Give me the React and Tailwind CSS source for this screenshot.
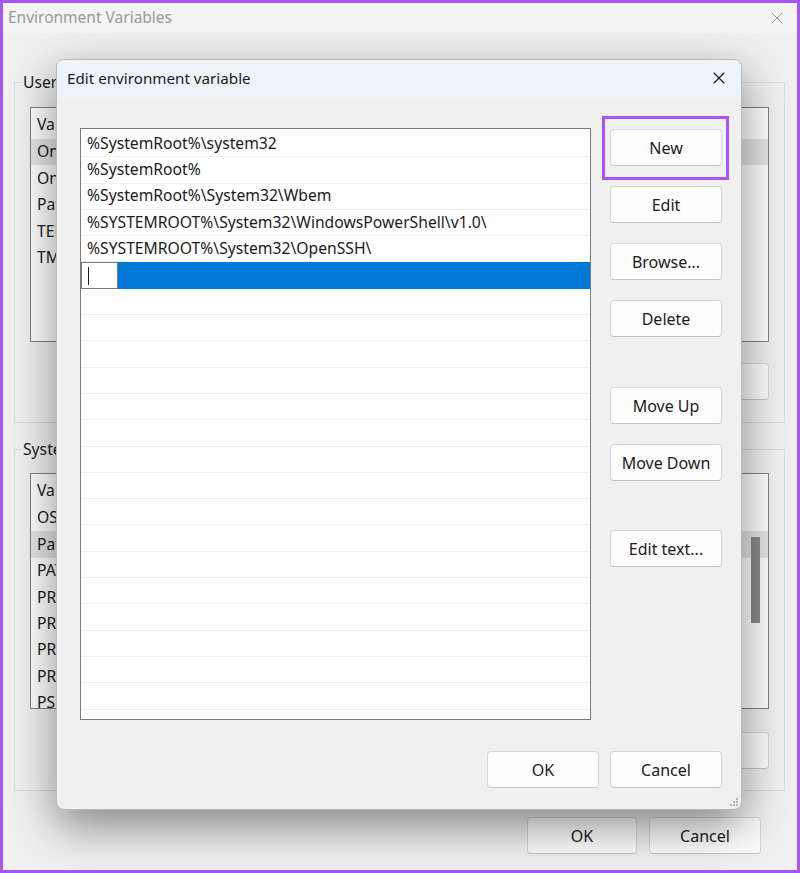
import {X} from 'lucide-react';

const paths = [
  '%SystemRoot%\\system32',
  '%SystemRoot%',
  '%SystemRoot%\\System32\\Wbem',
  '%SYSTEMROOT%\\System32\\WindowsPowerShell\\v1.0\\',
  '%SYSTEMROOT%\\System32\\OpenSSH\\',
];

const userVars = ['OneDrive', 'OneDriveConsumer', 'Path', 'TEMP', 'TMP'];
const systemVars = ['OS', 'Path', 'PATHEXT', 'PROCESSOR_ARCHITECTURE', 'PROCESSOR_IDENTIFIER', 'PROCESSOR_LEVEL', 'PROCESSOR_REVISION', 'PSModulePath'];

const font = {fontFamily: '"Noto Sans", "Open Sans", sans-serif'};

function WinButton({children, className = ''}) {
  return (
    <div className={`flex items-center justify-center h-[37px] rounded-[4px] border border-[#d6d6d6] border-b-[#c4c4c4] bg-[#fdfdfd] text-[16px] text-[#1b1b1b] ${className}`}>
      {children}
    </div>
  );
}

function BackList({items, selected, height}) {
  return (
    <div className={`border border-[#828282] bg-white overflow-hidden pt-[2px] ${height}`}>
      <div className="h-[29px] flex items-center pl-[6px] text-[15.7px] text-[#1b1b1b]">Variable</div>
      {items.map((name) => (
        <div key={name} className={`h-[26.4px] flex items-center pl-[6px] text-[15.7px] text-[#1b1b1b] ${name === selected ? 'bg-[#e5e5e5]' : ''}`}>
          {name}
        </div>
      ))}
    </div>
  );
}

function Group({label, children, className = ''}) {
  return (
    <fieldset className={`border border-[#dcdcdc] ${className}`}>
      <legend className="-ml-[8px] px-[1px] text-[15.7px] leading-[20px] text-[#1b1b1b]">{label}</legend>
      {children}
    </fieldset>
  );
}

export default function App() {
  const rows = Array.from({length: 23}, (_, i) => i);
  return (
    <div style={font} className="relative w-[800px] h-[873px] border-[3px] border-[#a855f7] bg-[#f0f0f0] overflow-hidden">
      {/* background window */}
      <div className="h-[30px] flex items-center justify-between pl-[5px] pr-[10px] bg-[#f4f4f4]">
        <span className="text-[15.5px] text-[#9a9a9a]">Environment Variables</span>
        <X size={20} strokeWidth={1.2} className="text-[#9a9a9a]" />
      </div>
      <div className="pl-[11px] pr-[12px]">
        <Group label="User variables for user" className="mt-[39px] px-[15px] pb-[22px]">
          <div className="mt-[15px]">
            <BackList items={userVars} selected="OneDrive" height="h-[235px]" />
          </div>
          <div className="mt-[21px] flex justify-end gap-[12px]">
            <WinButton className="w-[112px] bg-[#f7f7f7]">New...</WinButton>
            <WinButton className="w-[112px] bg-[#f7f7f7]">Edit...</WinButton>
            <WinButton className="w-[112px] bg-[#f7f7f7]">Delete</WinButton>
          </div>
        </Group>
        <Group label="System variables" className="mt-[16px] px-[15px] pb-[21px]">
          <div className="mt-[14px]">
            <BackList items={systemVars} selected="Path" height="h-[236px]" />
          </div>
          <div className="mt-[23px] flex justify-end gap-[12px]">
            <WinButton className="w-[112px] bg-[#f7f7f7]">New...</WinButton>
            <WinButton className="w-[112px] bg-[#f7f7f7]">Edit...</WinButton>
            <WinButton className="w-[112px] bg-[#f7f7f7]">Delete</WinButton>
          </div>
        </Group>
        <div className="mt-[26px] flex justify-end gap-[12px] pr-[24px]">
          <WinButton className="w-[110px] bg-[#f4f4f4]">OK</WinButton>
          <WinButton className="w-[112px] bg-[#f4f4f4]">Cancel</WinButton>
        </div>
      </div>

      {/* scrollbar thumb of the system list, visible right of the dialog */}
      <div className="absolute left-[748px] top-[534px] w-[9px] h-[86px] bg-[#8a8a8a]" />

      {/* Edit environment variable dialog */}
      <div className="absolute left-[53px] top-[56px] w-[686px] h-[751px] rounded-[8px] border border-[#b9b9b9] bg-[#f0f0f0] shadow-[0_16px_46px_rgba(0,0,0,0.45)] flex flex-col overflow-hidden">
        <div className="h-[40px] shrink-0 flex items-center justify-between pl-[10px] pr-[12px] pb-[4px] bg-[#eef3f9]">
          <span className="text-[15.2px] text-[#1b1b1b]">Edit environment variable</span>
          <X size={20} strokeWidth={1.4} className="text-[#1b1b1b]" />
        </div>
        <div className="flex-1 flex flex-col pl-[23px] pr-[19px] pt-[28px]">
          <div className="flex gap-[19px]">
            <div className="w-[511px] h-[592px] border border-[#7a7a7a] bg-white overflow-hidden pt-[2px]">
              {rows.map((i) => {
                if (i === paths.length) {
                  return (
                    <div key={i} className="h-[26.3px] flex bg-[#0078d7]">
                      <div className="w-[37px] h-full bg-white border border-[#7a7a7a] flex items-center pl-[6px]">
                        <div className="w-[1px] h-[18px] bg-[#1b1b1b]" />
                      </div>
                    </div>
                  );
                }
                return (
                  <div key={i} className="h-[26.3px] flex items-center pl-[6px] border-b border-[#f0f0f0] text-[15.7px] text-[#1b1b1b] whitespace-nowrap">
                    {paths[i] || ''}
                  </div>
                );
              })}
            </div>
            <div className="w-[112px] flex flex-col pt-[1px]">
              <div className="relative">
                <WinButton>New</WinButton>
                <div className="absolute -left-[8px] -top-[13px] w-[127px] h-[64px] border-[3px] border-[#a855f7]" />
              </div>
              <WinButton className="mt-[20px]">Edit</WinButton>
              <WinButton className="mt-[20px]">Browse...</WinButton>
              <WinButton className="mt-[20px]">Delete</WinButton>
              <WinButton className="mt-[50px]">Move Up</WinButton>
              <WinButton className="mt-[20px]">Move Down</WinButton>
              <WinButton className="mt-[49px]">Edit text...</WinButton>
            </div>
          </div>
          <div className="mt-[31px] flex justify-end gap-[11px]">
            <WinButton className="w-[112px] border-[#4f95d6] border-b-[#4f95d6]">OK</WinButton>
            <WinButton className="w-[112px]">Cancel</WinButton>
          </div>
        </div>
        <svg className="absolute right-[2px] bottom-[2px]" width="10" height="10" viewBox="0 0 10 10">
          <rect x="7" y="1" width="2" height="2" fill="#b5b5b5" />
          <rect x="4" y="4" width="2" height="2" fill="#b5b5b5" />
          <rect x="7" y="4" width="2" height="2" fill="#b5b5b5" />
          <rect x="1" y="7" width="2" height="2" fill="#b5b5b5" />
          <rect x="4" y="7" width="2" height="2" fill="#b5b5b5" />
          <rect x="7" y="7" width="2" height="2" fill="#b5b5b5" />
        </svg>
      </div>
    </div>
  );
}
